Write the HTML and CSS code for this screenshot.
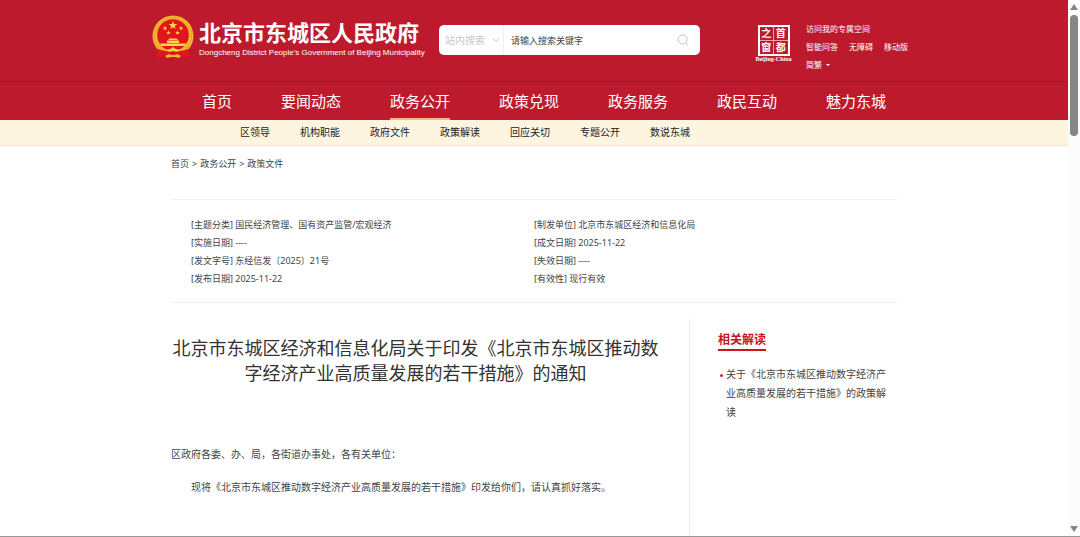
FILE: index.html
```html
<!DOCTYPE html>
<html lang="zh-CN">
<head>
<meta charset="utf-8">
<meta name="viewport" content="width=device-width, initial-scale=1">
<title>北京市东城区人民政府</title>
<link rel="stylesheet" href="styles.css">
</head>
<body>
<div class="viewport">
  <div class="page">
    <header class="masthead">
      <div class="masthead-inner">
        <a class="brand" href="#">
          <svg class="emblem" viewBox="0 0 42 44" aria-hidden="true">
            <circle cx="21" cy="21" r="20.500" fill="#f2b52c"/>
            <circle cx="21" cy="21" r="18.500" fill="none" stroke="#e09a24" stroke-width="1" stroke-dasharray="2 1.500"/>
            <circle cx="21" cy="20" r="15.800" fill="#e3151c"/>
            <path d="M21 6l1.100 3h3.200l-2.500 2 .9 3.100-2.700-1.800-2.700 1.800.9-3.100-2.500-2h3.200z" fill="#ffd94a"/>
            <g fill="#ffd94a">
              <path id="star" d="M13 11l.6 1.500h1.600l-1.200 1 .4 1.600-1.400-.9-1.400.9.4-1.600-1.200-1h1.600z"/>
              <use href="#star" x="3.500" y="4.500"/>
              <use href="#star" x="12.500" y="4.500"/>
              <use href="#star" x="16" y="0"/>
              <path d="M16 25l1.500-1.500h7L26 25zM15 25.500h12V28H15zM8 28.500h26L32.500 31h-23z"/>
            </g>
            <path d="M6 34q8 4 15-1 7 5 15 1l2 8h-6l-5-2H15l-5 2H4z" fill="#e3151c"/>
            <path d="M12 34q5 2 9-2 4 4 9 2-3 4-9 2-6 2-9-2z" fill="#ffd94a"/>
            <path d="M13 41l4-2 4 1.500 4-1.500 4 2-2 2-4-1h-4l-4 1z" fill="#f2b52c"/>
          </svg>
          <span class="brand-text">
            <span class="brand-name">北京市东城区人民政府</span>
            <span class="brand-en">Dongcheng District People's Government of Beijing Municipality</span>
          </span>
        </a>
        <form class="search">
          <div class="scope">
            <select class="scope-select" aria-label="搜索范围"><option>站内搜索</option></select>
            <svg class="chevron" viewBox="0 0 8 8" aria-hidden="true"><path d="M1 2.500l3 3 3-3" fill="none" stroke="#c4c4c4"/></svg>
          </div>
          <input class="search-input" type="text" placeholder="请输入搜索关键字" aria-label="请输入搜索关键字">
          <button class="search-button" type="button" aria-label="搜索">
            <svg class="search-icon" viewBox="0 0 12 12" aria-hidden="true"><circle cx="5.500" cy="5.500" r="4.500" fill="none" stroke="#c4c4c4"/><path d="M8.800 8.800l2.200 2.200" stroke="#c4c4c4"/></svg>
          </button>
        </form>
        <a class="seal" href="#">
          <span class="seal-grid"><span class="seal-cell">之</span><span class="seal-cell">首</span><span class="seal-cell">窗</span><span class="seal-cell">都</span></span>
          <span class="seal-caption">Beijing-China</span>
        </a>
        <div class="tools">
          <div class="tool-row"><a href="#">访问我的专属空间</a></div>
          <div class="tool-row"><a href="#">智能问答</a><a href="#">无障碍</a><a href="#">移动版</a></div>
          <div class="tool-row"><a class="variant" href="#">简繁<span class="caret"></span></a></div>
        </div>
      </div>
    </header>
    <nav class="main-nav" aria-label="主导航">
      <a href="#">首页</a><a href="#">要闻动态</a><a class="current" href="#">政务公开</a><a href="#">政策兑现</a><a href="#">政务服务</a><a href="#">政民互动</a><a href="#">魅力东城</a>
    </nav>
    <nav class="sub-nav" aria-label="政务公开">
      <a href="#">区领导</a><a href="#">机构职能</a><a href="#">政府文件</a><a href="#">政策解读</a><a href="#">回应关切</a><a href="#">专题公开</a><a href="#">数说东城</a>
    </nav>
    <div class="container">
      <nav class="crumbs" aria-label="当前位置"><a href="#">首页</a><span>&gt;</span><a href="#">政务公开</a><span>&gt;</span><a href="#">政策文件</a></nav>
      <div class="meta">
        <ul class="meta-list">
          <li>[主题分类] 国民经济管理、国有资产监管/宏观经济</li>
          <li>[实施日期] ----</li>
          <li>[发文字号] 东经信发〔2025〕21号</li>
          <li>[发布日期] 2025-11-22</li>
        </ul>
        <ul class="meta-list">
          <li>[制发单位] 北京市东城区经济和信息化局</li>
          <li>[成文日期] 2025-11-22</li>
          <li>[失效日期] ----</li>
          <li>[有效性] 现行有效</li>
        </ul>
      </div>
      <div class="columns">
        <main class="article">
          <h1 class="title">北京市东城区经济和信息化局关于印发《北京市东城区推动数字经济产业高质量发展的若干措施》的通知</h1>
          <div class="body-text">
            <p>区政府各委、办、局，各街道办事处，各有关单位：</p>
            <p class="indent">现将《北京市东城区推动数字经济产业高质量发展的若干措施》印发给你们，请认真抓好落实。</p>
          </div>
        </main>
        <aside class="related">
          <h2 class="related-title">相关解读</h2>
          <ul class="related-list">
            <li><a href="#">关于《北京市东城区推动数字经济产业高质量发展的若干措施》的政策解读</a></li>
          </ul>
        </aside>
      </div>
    </div>
  </div>
  <div class="scrollbar" aria-hidden="true">
    <svg class="arrow" viewBox="0 0 8 6"><path d="M4 0l4 6H0z" fill="#858585"/></svg>
    <div class="track"><div class="thumb"></div></div>
    <svg class="arrow" viewBox="0 0 8 6"><path d="M0 0h8L4 6z" fill="#858585"/></svg>
  </div>
</div>
</body>
</html>
```
FILE: styles.css
```css
* { box-sizing: border-box; }
body, h1, h2, p, ul { margin: 0; padding: 0; }
ul { list-style: none; }
a { color: inherit; text-decoration: none; }
body {
  font-family: "Noto Sans", "Noto Sans CJK SC", sans-serif;
  font-size: 10px;
  color: #444;
  background: #fff;
}
.viewport {
  display: flex;
  height: 100vh;
  overflow: hidden;
  border-bottom: 1px solid #999;
}
.page { flex: 1; min-width: 0; display: flex; flex-direction: column; }

.masthead { background: #bd1b2d; border-bottom: 1px solid #a51526; }
.masthead-inner {
  display: flex;
  align-items: flex-start;
  width: 764px;
  max-width: 100%;
  height: 81px;
  margin: 0 auto;
}
.brand { display: flex; gap: 5px; padding-top: 15px; width: 287px; color: #fff; }
.emblem { width: 42px; height: 44px; flex: none; }
.brand-text { display: flex; flex-direction: column; gap: 2px; padding-top: 2px; white-space: nowrap; }
.brand-name { font-family: "Noto Sans CJK SC", sans-serif; font-size: 22px; line-height: 28px; font-weight: 700; }
.brand-en { font-family: "Liberation Sans", Arial, sans-serif; font-size: 8px; line-height: 12px; }

.search {
  display: flex;
  width: 261px;
  height: 30px;
  margin: 25px 57px 0 0;
  background: #fff;
  border-radius: 5px;
  overflow: hidden;
}
.scope { display: flex; align-items: center; width: 65px; padding: 0 3px 0 6px; border-right: 1px solid #f0f0f0; }
.scope-select {
  flex: 1;
  min-width: 0;
  padding: 0;
  border: 0;
  appearance: none;
  background: transparent;
  font: inherit;
  color: #c8c8c8;
}
.chevron { width: 8px; height: 8px; }
.search-input { flex: 1; min-width: 0; padding: 0 7px; border: 0; font: inherit; font-size: 9px; background: transparent; }
.search-input::placeholder { color: #444; opacity: 1; }
.search-button { width: 34px; padding: 0; border: 0; background: transparent; }
.search-icon { display: block; width: 12px; height: 12px; margin: 0 auto; }

.seal { display: flex; flex-direction: column; align-items: center; width: 33px; margin: 25px 16px 0 0; color: #fff; }
.seal-grid {
  display: grid;
  grid-template-columns: 1fr 1fr;
  grid-template-rows: 1fr 1fr;
  gap: 1px;
  width: 32px;
  height: 31px;
  border: 2px solid #fff;
  background: #e9a5ac;
}
.seal-cell { background: #bd1b2d; font-size: 10px; line-height: 13px; font-weight: 700; text-align: center; }
.seal-caption { font-family: "Liberation Serif", serif; font-size: 6px; line-height: 6px; font-weight: 700; white-space: nowrap; }

.tools { padding-top: 20px; font-size: 8px; line-height: 18px; color: #fff; white-space: nowrap; }
.tool-row { display: flex; gap: 11px; }
.variant { display: flex; align-items: center; gap: 4px; }
.caret { border: 2px solid transparent; border-top-color: #fff; border-bottom: 0; }

.main-nav {
  display: flex;
  justify-content: center;
  gap: 49px;
  padding-left: 20px;
  background: #bd1b2d;
  color: #fff;
  font-size: 15px;
  line-height: 38px;
  height: 38px;
}
.main-nav a { white-space: nowrap; }
.main-nav .current { border-bottom: 2px solid #f8b878; }
.sub-nav { background: #fef5e1; border-bottom: 1px solid #f9e6c6; color: #222; line-height: 25px; display: flex; justify-content: center; gap: 30px; padding-right: 138px; }

.container { width: 726px; max-width: 100%; margin: 0 auto; flex: 1; display: flex; flex-direction: column; }
.crumbs { display: flex; gap: 3px; padding: 9px 0 26px; font-size: 9px; line-height: 18px; }
.meta {
  display: grid;
  grid-template-columns: 343px 1fr;
  padding: 16px 20px 14px;
  border-top: 1px solid #f0f0f0;
  border-bottom: 1px solid #f0f0f0;
  font-size: 9px;
  line-height: 18px;
}
.columns { flex: 1; display: grid; grid-template-columns: 1fr 207px; margin-top: 16px; }
.article { padding: 17px 29px 0 0; border-right: 1px solid #eee; }
.title { font-size: 18px; line-height: 25px; font-weight: 400; text-align: center; color: #333; }
.body-text { padding-top: 52px; line-height: 33px; }
.indent { text-indent: 2em; }
.related { padding: 12px 7px 0 28px; }
.related-title { display: inline-block; font-size: 12px; line-height: 18px; color: #c9151e; border-bottom: 2px solid #c9151e; }
.related-list { padding-top: 14px; line-height: 19px; }
.related-list li { position: relative; padding-left: 8px; }
.related-list li::before {
  content: "";
  position: absolute;
  left: 2px;
  top: 9px;
  width: 3px;
  height: 3px;
  border-radius: 50%;
  background: #c9284a;
}

.scrollbar { width: 12px; display: flex; flex-direction: column; align-items: center; gap: 5px; padding: 4px 0; background: #fcfcfc; }
.arrow { width: 8px; height: 6px; flex: none; }
.track { flex: 1; }
.thumb { width: 8px; height: 24%; border-radius: 4px; background: #858585; }
```
